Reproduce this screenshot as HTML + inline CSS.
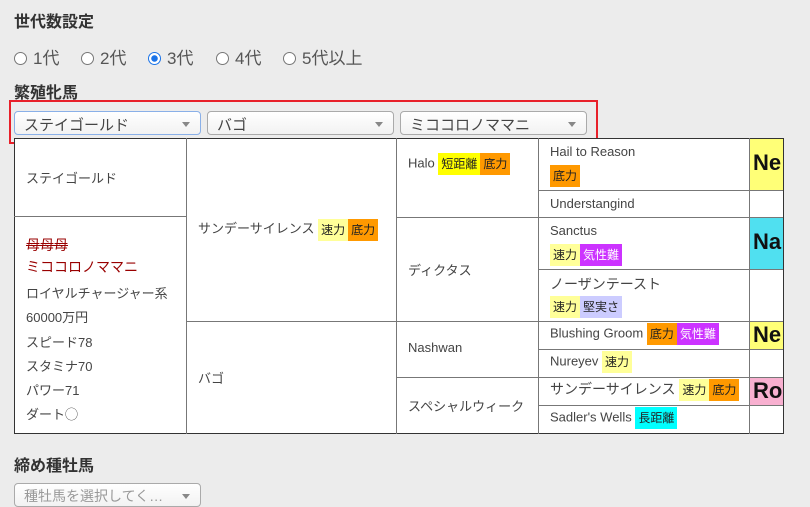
<!DOCTYPE html><html><head><meta charset="utf-8"><style>
body{margin:0;width:810px;height:503px;background:#ececec;font-family:"Liberation Sans","Noto Sans CJK JP",sans-serif;color:#444;position:relative;overflow:hidden;font-size:13px}
.a{position:absolute;white-space:nowrap}
h3{position:absolute;margin:0;font-size:16px;font-weight:bold;color:#333}
.sel{position:absolute;height:24px;border:1px solid #aaa;border-radius:4px;background:linear-gradient(#fff,#f2f2f2);font-size:14px;color:#444;box-sizing:border-box;padding:2px 0 0 9px}
.sel:after{content:"";position:absolute;right:10px;top:10px;border:4px solid transparent;border-top:5px solid #888;border-bottom:0}
.c{position:absolute;background:#fff;border:1px solid #777;box-sizing:border-box}
.t{display:inline-block;padding:0 3px;font-size:12px;line-height:22px;color:#222;vertical-align:middle}
.y{background:#ff9}.o{background:#f90}.Y{background:#ff0}.p{background:#c3f;color:#fff}.l{background:#ccf}.cy{background:#0ff}
.big{font-weight:bold;font-size:22px;color:#111;padding:0 0 0 3px;overflow:hidden;box-sizing:border-box}
.r{position:absolute;top:44px;font-size:17px;color:#555;white-space:nowrap}
.radio{display:inline-block;width:13px;height:13px;border:1px solid #777;border-radius:50%;background:#fff;vertical-align:-1px;margin-right:6px;box-sizing:border-box}
</style></head><body>
<h3 style="left:14px;top:8px">世代数設定</h3>
<div class="r" style="left:14px"><span class="radio"></span>1代</div>
<div class="r" style="left:81px"><span class="radio"></span>2代</div>
<div class="r" style="left:148px"><span class="radio" style="border:1px solid #1a73e8;background:radial-gradient(#1a73e8 3px,#fff 3.5px)"></span>3代</div>
<div class="r" style="left:216px"><span class="radio"></span>4代</div>
<div class="r" style="left:283px"><span class="radio"></span>5代以上</div>
<h3 style="left:14px;top:79px">繁殖牝馬</h3>
<div class="a" style="left:9px;top:100px;width:585px;height:40px;border:2px solid #e8202a"></div>
<div class="sel" style="left:14px;top:111px;width:187px;border-color:#8ab0e8;font-size:15px">ステイゴールド</div>
<div class="sel" style="left:207px;top:111px;width:187px;font-size:15px">バゴ</div>
<div class="sel" style="left:400px;top:111px;width:187px;font-size:15px">ミココロノママニ</div>

<div class="a" style="left:14px;top:138px;width:770px;height:296px;border:1px solid #333;box-sizing:border-box;background:#fff"></div>
<div class="a" style="left:26px;top:168px">ステイゴールド</div>
<div class="a" style="left:14px;top:216px;width:173px;height:1px;background:#777"></div>
<div class="a" style="left:26px;top:234px;color:#900;font-size:14px;line-height:22px">
<s>母母母</s><br>ミココロノママニ</div>
<div class="a" style="left:26px;top:282px;line-height:24.3px;font-size:13px">ロイヤルチャージャー系<br>60000万円<br>スピード78<br>スタミナ70<br>パワー71<br>ダート◯</div>
<div class="a" style="left:186px;top:138px;width:1px;height:296px;background:#777"></div>
<div class="a" style="left:396px;top:138px;width:1px;height:296px;background:#777"></div>
<div class="a" style="left:538px;top:138px;width:1px;height:296px;background:#777"></div>
<div class="a" style="left:749px;top:138px;width:1px;height:296px;background:#777"></div>
<div class="a" style="left:186px;top:321px;width:597px;height:1px;background:#777"></div>
<div class="a" style="left:396px;top:217px;width:387px;height:1px;background:#777"></div>
<div class="a" style="left:396px;top:377px;width:387px;height:1px;background:#777"></div>
<div class="a" style="left:538px;top:190px;width:245px;height:1px;background:#777"></div>
<div class="a" style="left:538px;top:269px;width:245px;height:1px;background:#777"></div>
<div class="a" style="left:538px;top:349px;width:245px;height:1px;background:#777"></div>
<div class="a" style="left:538px;top:405px;width:245px;height:1px;background:#777"></div>

<div class="a" style="left:198px;top:218px">サンデーサイレンス <span class="t y">速力</span><span class="t o">底力</span></div>
<div class="a" style="left:198px;top:368px">バゴ</div>
<div class="a" style="left:408px;top:153px">Halo <span class="t Y">短距離</span><span class="t o">底力</span></div>
<div class="a" style="left:408px;top:260px">ディクタス</div>
<div class="a" style="left:408px;top:340px">Nashwan</div>
<div class="a" style="left:408px;top:396px">スペシャルウィーク</div>

<div class="a" style="left:550px;top:144px">Hail to Reason</div>
<div class="a" style="left:550px;top:165px"><span class="t o">底力</span></div>
<div class="a" style="left:550px;top:196px">Understangind</div>
<div class="a" style="left:550px;top:223px">Sanctus</div>
<div class="a" style="left:550px;top:244px"><span class="t y">速力</span><span class="t p">気性難</span></div>
<div class="a" style="left:550px;top:274px;font-size:14px">ノーザンテースト</div>
<div class="a" style="left:550px;top:296px"><span class="t y">速力</span><span class="t l">堅実さ</span></div>
<div class="a" style="left:550px;top:323px">Blushing Groom <span class="t o">底力</span><span class="t p">気性難</span></div>
<div class="a" style="left:550px;top:351px">Nureyev <span class="t y">速力</span></div>
<div class="a" style="left:550px;top:379px;font-size:14px">サンデーサイレンス <span class="t y">速力</span><span class="t o">底力</span></div>
<div class="a" style="left:550px;top:407px">Sadler's Wells <span class="t cy">長距離</span></div>

<div class="a big" style="left:750px;top:139px;width:33px;height:51px;line-height:48px;background:#ff7">Ne</div>
<div class="a big" style="left:750px;top:218px;width:33px;height:51px;line-height:48px;background:#50e0f0">Na</div>
<div class="a big" style="left:750px;top:322px;width:33px;height:27px;line-height:26px;background:#ff7">Ne</div>
<div class="a big" style="left:750px;top:378px;width:33px;height:27px;line-height:26px;background:#f8b0d0">Ro</div>

<h3 style="left:14px;top:452px">締め種牡馬</h3>
<div class="sel" style="left:14px;top:483px;width:187px;color:#999">種牡馬を選択してく…</div>
</body></html>
